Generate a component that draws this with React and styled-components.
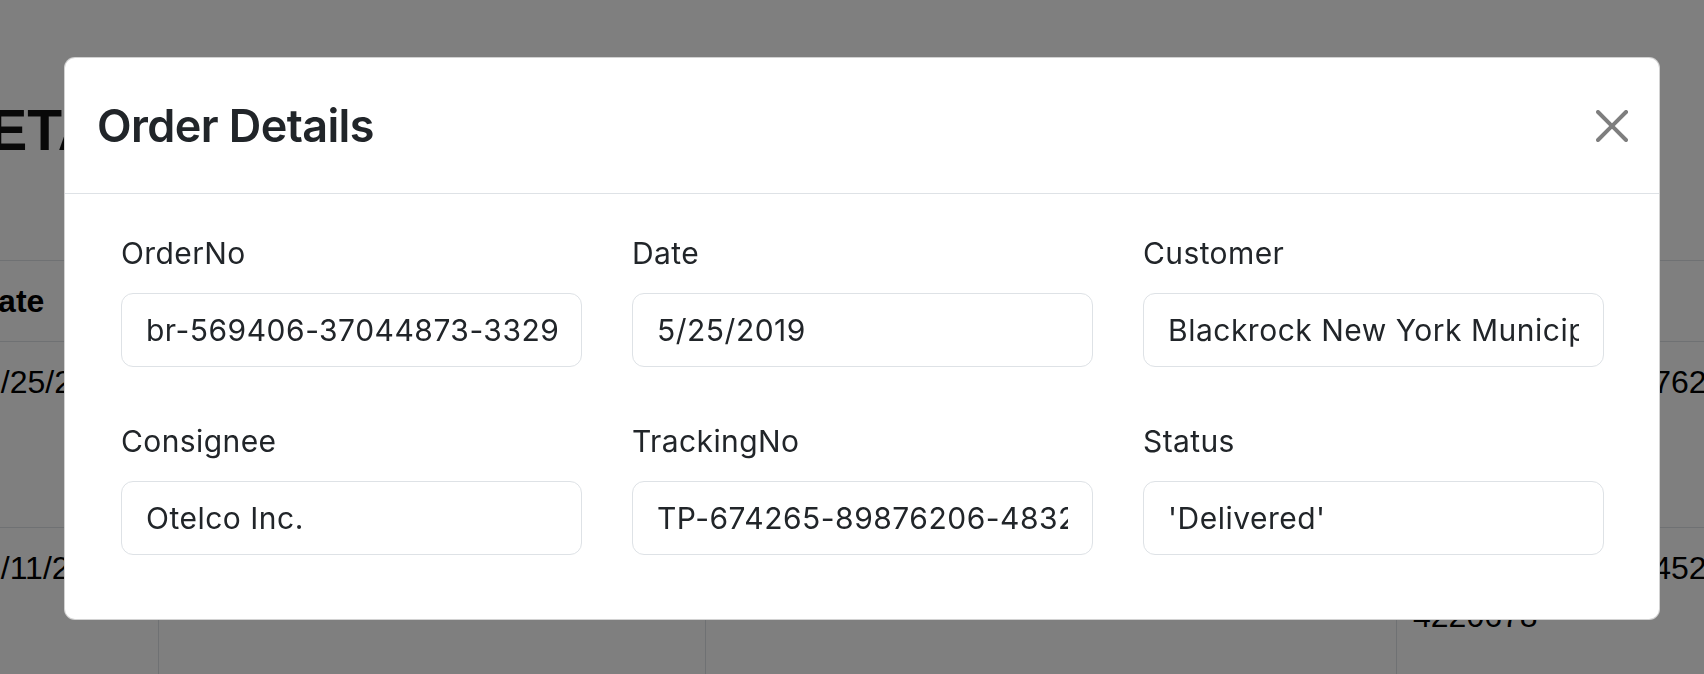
import React from 'react';
import styled, { createGlobalStyle } from 'styled-components';

const GlobalStyle = createGlobalStyle`
  html, body {
    margin: 0;
    padding: 0;
    background: #ffffff;
    overflow: hidden;
  }
  body {
    font-family: "Liberation Sans", Arial, sans-serif;
    color: #000;
  }
`;

const Page = styled.div`
  width: 1704px;
  height: 674px;
  overflow: hidden;
  padding-top: 96px;
  box-sizing: border-box;
`;

const PageInner = styled.div`
  margin-left: -34px;
`;

const Heading = styled.h1`
  margin: 0 0 96px 0;
  font-size: 57px;
  line-height: 1.2;
  font-weight: 700;
  text-indent: -18px;
  color: #111;
`;

const Table = styled.table`
  width: 1934px;
  border-collapse: collapse;
  table-layout: fixed;
  font-size: 32px;
  line-height: 1.5;
  color: #000;
`;

const Col = styled.col`
  width: ${p => p.$w}px;
`;

const Th = styled.th`
  text-align: left;
  padding: 16px 16px;
  text-indent: ${p => p.$indent || 0}px;
  border-top: 1px solid #dee2e6;
  border-bottom: 1px solid #dee2e6;
  border-left: 1px solid #dee2e6;
  font-weight: 700;
  white-space: nowrap;
  overflow: hidden;
`;

const Row = styled.tr`
  height: ${p => p.$h}px;
`;

const Td = styled.td`
  vertical-align: top;
  padding: 16px 16px;
  border-bottom: 1px solid #dee2e6;
  border-left: 1px solid #dee2e6;
  white-space: nowrap;
  overflow: hidden;
`;

const Backdrop = styled.div`
  position: fixed;
  inset: 0;
  background: rgba(0, 0, 0, 0.5);
  display: flex;
  align-items: flex-start;
  padding: 57px 0 0 64px;
`;

const Modal = styled.div`
  width: 1596px;
  box-sizing: border-box;
  background: #fff;
  border: 1px solid rgba(0, 0, 0, 0.175);
  border-radius: 11px;
  display: flex;
  flex-direction: column;
  font-family: Inter, "Noto Sans", sans-serif;
  color: #212529;
`;

const Header = styled.div`
  height: 136px;
  box-sizing: border-box;
  display: flex;
  align-items: center;
  justify-content: space-between;
  padding: 0 31px 0 32px;
  border-bottom: 1px solid #dee2e6;
`;

const Title = styled.h4`
  margin: 0;
  font-size: 45px;
  font-weight: 600;
  line-height: 1.2;
  letter-spacing: -0.6px;
`;

const CloseButton = styled.button`
  width: 32px;
  height: 32px;
  padding: 0;
  border: 0;
  background: transparent;
  opacity: 0.5;
  display: flex;
  align-items: center;
  justify-content: center;
  cursor: pointer;
`;

const Body = styled.div`
  padding: 37px 56px 64px 56px;
  display: grid;
  grid-template-columns: repeat(3, 461px);
  column-gap: 50px;
  row-gap: 52px;
`;

const Field = styled.div`
  display: flex;
  flex-direction: column;
  gap: 17px;
`;

const Label = styled.label`
  font-size: 30px;
  line-height: 1.5;
  letter-spacing: 0.4px;
`;

const Input = styled.input`
  width: 100%;
  height: 74px;
  box-sizing: border-box;
  padding: 0 24px;
  border: 1px solid #dee2e6;
  border-radius: 12px;
  font-family: Inter, "Noto Sans", sans-serif;
  font-size: 30px;
  letter-spacing: 0.5px;
  color: #212529;
  background: #fff;
  outline: none;
`;

const CloseIcon = () => (
  <svg width="32" height="32" viewBox="0 0 16 16" fill="#000">
    <path d="M.293.293a1 1 0 0 1 1.414 0L8 6.586 14.293.293a1 1 0 1 1 1.414 1.414L9.414 8l6.293 6.293a1 1 0 0 1-1.414 1.414L8 9.414l-6.293 6.293a1 1 0 0 1-1.414-1.414L6.586 8 .293 1.707a1 1 0 0 1 0-1.414z" />
  </svg>
);

const fields = [
  { label: 'OrderNo', value: 'br-569406-37044873-3329116' },
  { label: 'Date', value: '5/25/2019' },
  { label: 'Customer', value: 'Blackrock New York Municipal Bond Trust' },
  { label: 'Consignee', value: 'Otelco Inc.' },
  { label: 'TrackingNo', value: 'TP-674265-89876206-4832452' },
  { label: 'Status', value: "'Delivered'" },
];

const App = () => {
  return (
    <>
      <GlobalStyle />
      <Page>
        <PageInner>
          <Heading>DETAILS</Heading>
          <Table>
            <colgroup>
              <Col $w={192} />
              <Col $w={547} />
              <Col $w={691} />
              <Col $w={504} />
            </colgroup>
            <thead>
              <tr>
                <Th $indent={-8}>Date</Th>
                <Th>Customer</Th>
                <Th>Consignee</Th>
                <Th>TrackingNo</Th>
              </tr>
            </thead>
            <tbody>
              <Row $h={186}>
                <Td>5/25/2019</Td>
                <Td>Blackrock</Td>
                <Td>Otelco Inc.</Td>
                <Td>TP-674265-8987762<br />06-4832</Td>
              </Row>
              <Row $h={186}>
                <Td>3/11/2019</Td>
                <Td>Nuveen</Td>
                <Td>Apple Inc.</Td>
                <Td>TP-581204-3920452<br />4220678</Td>
              </Row>
            </tbody>
          </Table>
        </PageInner>
      </Page>
      <Backdrop>
        <Modal>
          <Header>
            <Title>Order Details</Title>
            <CloseButton aria-label="Close">
              <CloseIcon />
            </CloseButton>
          </Header>
          <Body>
            {fields.map(f => (
              <Field key={f.label}>
                <Label>{f.label}</Label>
                <Input readOnly value={f.value} />
              </Field>
            ))}
          </Body>
        </Modal>
      </Backdrop>
    </>
  );
};

export default App;
